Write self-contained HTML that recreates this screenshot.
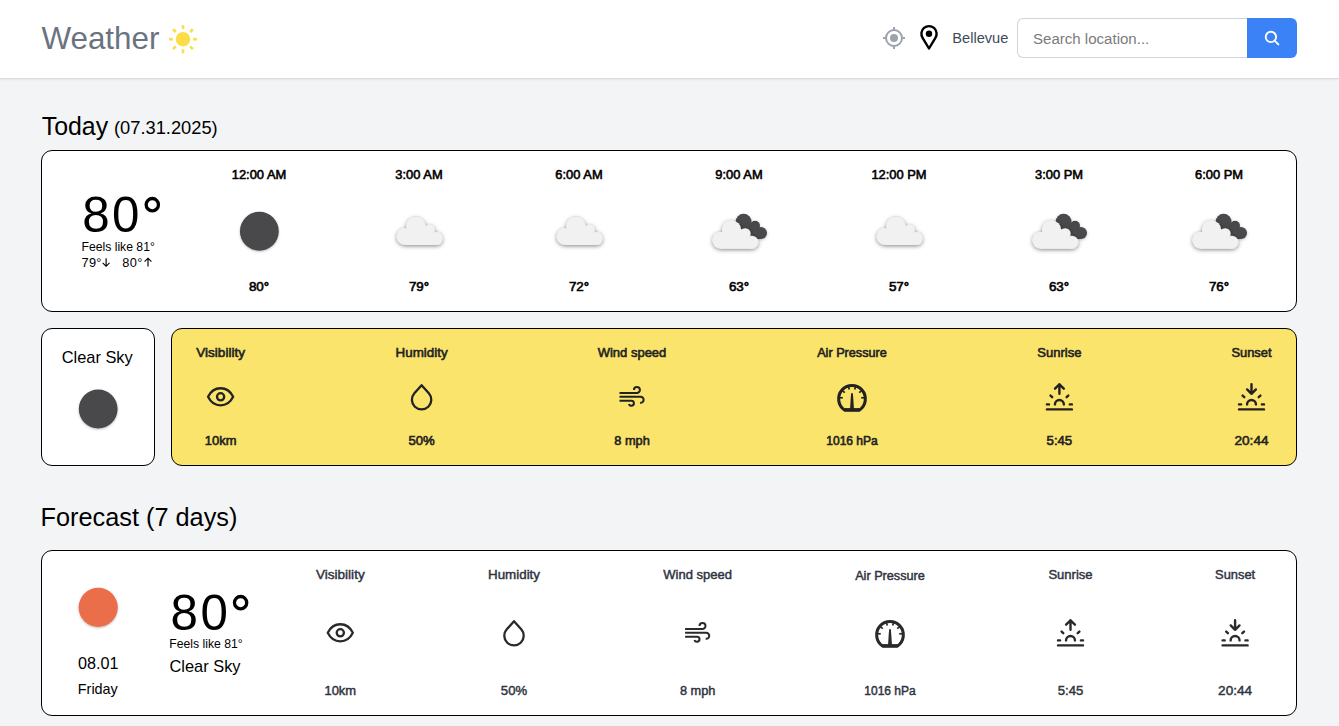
<!DOCTYPE html>
<html><head><meta charset="utf-8"><style>
html,body{margin:0;padding:0;}
body{width:1339px;height:726px;overflow:hidden;background:#f3f4f6;position:relative;font-family:"Liberation Sans", sans-serif;}
.t{position:absolute;line-height:0;white-space:nowrap;}
svg.ov{position:absolute;left:0;top:0;pointer-events:none;}
</style></head><body>
<div style="position:absolute;left:-10px;top:0px;width:1359px;height:78px;box-sizing:border-box;background:#fff;box-shadow:0 1px 3px 0 rgba(0,0,0,.1),0 1px 2px -1px rgba(0,0,0,.1);"></div><div class="t" style="left:41.40px;top:39.12px;font-size:31.4px;font-weight:400;color:#6b7280;">Weather</div><div class="t" style="left:952.30px;top:38.34px;font-size:14.6px;font-weight:400;color:#404a58;">Bellevue</div><div style="position:absolute;left:1017px;top:18px;width:231px;height:40px;box-sizing:border-box;background:#fff;border:1px solid #d1d5db;border-right:none;border-radius:6px 0 0 6px;"></div><div class="t" style="left:1033.00px;top:39.39px;font-size:15.05px;font-weight:400;color:#7b7b7b;">Search location...</div><div style="position:absolute;left:1247px;top:18px;width:50px;height:40px;box-sizing:border-box;background:#3b82f6;border-radius:0 6px 6px 0;"></div><div class="t" style="left:41.70px;top:125.87px;font-size:24.9px;font-weight:400;color:#000;">Today</div><div class="t" style="left:114.00px;top:127.86px;font-size:18.3px;font-weight:400;color:#000;">(07.31.2025)</div><div style="position:absolute;left:41px;top:150px;width:1256px;height:162px;box-sizing:border-box;background:#fff;border:1px solid #000;border-radius:11px;"></div><div class="t" style="left:82.30px;top:215.12px;font-size:49.3px;font-weight:400;color:#000;letter-spacing:2.4px;">80</div><div class="t" style="left:81.50px;top:246.67px;font-size:12.2px;font-weight:400;color:#000;">Feels like 81°</div><div class="t" style="left:81.50px;top:262.96px;font-size:12.8px;font-weight:400;color:#000;letter-spacing:0.3px;">79°</div><div class="t" style="left:122.30px;top:262.96px;font-size:12.8px;font-weight:400;color:#000;letter-spacing:0.3px;">80°</div><div class="t" style="left:-41.00px;width:600px;text-align:center;top:174.93px;font-size:12.9px;font-weight:400;color:#000;-webkit-text-stroke:0.6px #000;">12:00 AM</div><div class="t" style="left:-41.00px;width:600px;text-align:center;top:286.76px;font-size:13.4px;font-weight:400;color:#000;-webkit-text-stroke:0.6px #000;">80°</div><div class="t" style="left:119.00px;width:600px;text-align:center;top:174.93px;font-size:12.9px;font-weight:400;color:#000;-webkit-text-stroke:0.6px #000;">3:00 AM</div><div class="t" style="left:119.00px;width:600px;text-align:center;top:286.76px;font-size:13.4px;font-weight:400;color:#000;-webkit-text-stroke:0.6px #000;">79°</div><div class="t" style="left:279.00px;width:600px;text-align:center;top:174.93px;font-size:12.9px;font-weight:400;color:#000;-webkit-text-stroke:0.6px #000;">6:00 AM</div><div class="t" style="left:279.00px;width:600px;text-align:center;top:286.76px;font-size:13.4px;font-weight:400;color:#000;-webkit-text-stroke:0.6px #000;">72°</div><div class="t" style="left:439.00px;width:600px;text-align:center;top:174.93px;font-size:12.9px;font-weight:400;color:#000;-webkit-text-stroke:0.6px #000;">9:00 AM</div><div class="t" style="left:439.00px;width:600px;text-align:center;top:286.76px;font-size:13.4px;font-weight:400;color:#000;-webkit-text-stroke:0.6px #000;">63°</div><div class="t" style="left:599.00px;width:600px;text-align:center;top:174.93px;font-size:12.9px;font-weight:400;color:#000;-webkit-text-stroke:0.6px #000;">12:00 PM</div><div class="t" style="left:599.00px;width:600px;text-align:center;top:286.76px;font-size:13.4px;font-weight:400;color:#000;-webkit-text-stroke:0.6px #000;">57°</div><div class="t" style="left:759.00px;width:600px;text-align:center;top:174.93px;font-size:12.9px;font-weight:400;color:#000;-webkit-text-stroke:0.6px #000;">3:00 PM</div><div class="t" style="left:759.00px;width:600px;text-align:center;top:286.76px;font-size:13.4px;font-weight:400;color:#000;-webkit-text-stroke:0.6px #000;">63°</div><div class="t" style="left:919.00px;width:600px;text-align:center;top:174.93px;font-size:12.9px;font-weight:400;color:#000;-webkit-text-stroke:0.6px #000;">6:00 PM</div><div class="t" style="left:919.00px;width:600px;text-align:center;top:286.76px;font-size:13.4px;font-weight:400;color:#000;-webkit-text-stroke:0.6px #000;">76°</div><div style="position:absolute;left:41px;top:328px;width:114px;height:138px;box-sizing:border-box;background:#fff;border:1px solid #000;border-radius:11px;"></div><div class="t" style="left:-202.80px;width:600px;text-align:center;top:357.22px;font-size:16.4px;font-weight:400;color:#000;">Clear Sky</div><div style="position:absolute;left:171px;top:328px;width:1126px;height:138px;box-sizing:border-box;background:#fae46b;border:1px solid #000;border-radius:11px;"></div><div class="t" style="left:-79.40px;width:600px;text-align:center;top:352.69px;font-size:13.58px;font-weight:400;color:#222;-webkit-text-stroke:0.6px #222;">Visibility</div><div class="t" style="left:-79.40px;width:600px;text-align:center;top:440.81px;font-size:12.96px;font-weight:400;color:#222;-webkit-text-stroke:0.6px #222;">10km</div><div class="t" style="left:121.60px;width:600px;text-align:center;top:352.76px;font-size:13.39px;font-weight:400;color:#222;-webkit-text-stroke:0.6px #222;">Humidity</div><div class="t" style="left:121.60px;width:600px;text-align:center;top:440.75px;font-size:13.13px;font-weight:400;color:#222;-webkit-text-stroke:0.6px #222;">50%</div><div class="t" style="left:332.00px;width:600px;text-align:center;top:352.90px;font-size:13.0px;font-weight:400;color:#222;-webkit-text-stroke:0.6px #222;">Wind speed</div><div class="t" style="left:332.00px;width:600px;text-align:center;top:440.88px;font-size:12.75px;font-weight:400;color:#222;-webkit-text-stroke:0.6px #222;">8 mph</div><div class="t" style="left:552.00px;width:600px;text-align:center;top:353.01px;font-size:12.68px;font-weight:400;color:#222;-webkit-text-stroke:0.6px #222;">Air Pressure</div><div class="t" style="left:552.00px;width:600px;text-align:center;top:441.14px;font-size:12.0px;font-weight:400;color:#222;-webkit-text-stroke:0.6px #222;">1016 hPa</div><div class="t" style="left:759.40px;width:600px;text-align:center;top:352.90px;font-size:13.0px;font-weight:400;color:#222;-webkit-text-stroke:0.6px #222;">Sunrise</div><div class="t" style="left:759.40px;width:600px;text-align:center;top:440.74px;font-size:13.16px;font-weight:400;color:#222;-webkit-text-stroke:0.6px #222;">5:45</div><div class="t" style="left:951.50px;width:600px;text-align:center;top:352.93px;font-size:12.89px;font-weight:400;color:#222;-webkit-text-stroke:0.6px #222;">Sunset</div><div class="t" style="left:951.50px;width:600px;text-align:center;top:440.59px;font-size:13.6px;font-weight:400;color:#222;-webkit-text-stroke:0.6px #222;">20:44</div><div class="t" style="left:40.60px;top:517.03px;font-size:25.3px;font-weight:400;color:#000;">Forecast (7 days)</div><div style="position:absolute;left:41px;top:550px;width:1256px;height:166px;box-sizing:border-box;background:#fff;border:1px solid #000;border-radius:11px;"></div><div class="t" style="left:-201.80px;width:600px;text-align:center;top:663.39px;font-size:16.2px;font-weight:400;color:#000;">08.01</div><div class="t" style="left:-202.20px;width:600px;text-align:center;top:688.61px;font-size:14.4px;font-weight:400;color:#000;">Friday</div><div class="t" style="left:170.60px;top:613.12px;font-size:49.3px;font-weight:400;color:#000;letter-spacing:2.4px;">80</div><div class="t" style="left:169.30px;top:644.37px;font-size:12.2px;font-weight:400;color:#000;">Feels like 81°</div><div class="t" style="left:169.50px;top:665.52px;font-size:16.4px;font-weight:400;color:#000;">Clear Sky</div><div class="t" style="left:40.30px;width:600px;text-align:center;top:575.19px;font-size:13.58px;font-weight:400;color:#2f3440;-webkit-text-stroke:0.45px #2f3440;">Visibility</div><div class="t" style="left:40.30px;width:600px;text-align:center;top:690.91px;font-size:12.96px;font-weight:400;color:#2f3440;-webkit-text-stroke:0.45px #2f3440;">10km</div><div class="t" style="left:214.00px;width:600px;text-align:center;top:575.26px;font-size:13.39px;font-weight:400;color:#2f3440;-webkit-text-stroke:0.45px #2f3440;">Humidity</div><div class="t" style="left:214.00px;width:600px;text-align:center;top:690.85px;font-size:13.13px;font-weight:400;color:#2f3440;-webkit-text-stroke:0.45px #2f3440;">50%</div><div class="t" style="left:397.60px;width:600px;text-align:center;top:575.40px;font-size:13.0px;font-weight:400;color:#2f3440;-webkit-text-stroke:0.45px #2f3440;">Wind speed</div><div class="t" style="left:397.60px;width:600px;text-align:center;top:690.98px;font-size:12.75px;font-weight:400;color:#2f3440;-webkit-text-stroke:0.45px #2f3440;">8 mph</div><div class="t" style="left:590.00px;width:600px;text-align:center;top:575.51px;font-size:12.68px;font-weight:400;color:#2f3440;-webkit-text-stroke:0.45px #2f3440;">Air Pressure</div><div class="t" style="left:590.00px;width:600px;text-align:center;top:691.24px;font-size:12.0px;font-weight:400;color:#2f3440;-webkit-text-stroke:0.45px #2f3440;">1016 hPa</div><div class="t" style="left:770.50px;width:600px;text-align:center;top:575.40px;font-size:13.0px;font-weight:400;color:#2f3440;-webkit-text-stroke:0.45px #2f3440;">Sunrise</div><div class="t" style="left:770.50px;width:600px;text-align:center;top:690.84px;font-size:13.16px;font-weight:400;color:#2f3440;-webkit-text-stroke:0.45px #2f3440;">5:45</div><div class="t" style="left:935.10px;width:600px;text-align:center;top:575.43px;font-size:12.89px;font-weight:400;color:#2f3440;-webkit-text-stroke:0.45px #2f3440;">Sunset</div><div class="t" style="left:935.10px;width:600px;text-align:center;top:690.69px;font-size:13.6px;font-weight:400;color:#2f3440;-webkit-text-stroke:0.45px #2f3440;">20:44</div>
<svg class="ov" width="1339" height="726" viewBox="0 0 1339 726">
<defs>
<filter id="sh" x="-50%" y="-50%" width="200%" height="200%"><feDropShadow dx="0" dy="1" stdDeviation="1.2" flood-color="#000" flood-opacity="0.25"/></filter>
<filter id="shc" x="-50%" y="-50%" width="200%" height="200%"><feDropShadow dx="0" dy="1" stdDeviation="2" flood-color="#000" flood-opacity="0.5"/></filter>
<filter id="shd" x="-50%" y="-50%" width="200%" height="200%"><feDropShadow dx="0" dy="1" stdDeviation="1.5" flood-color="#000" flood-opacity="0.25"/></filter>
</defs>
<g fill="#fcdc47"><circle cx="183" cy="39.2" r="7.2"/><line x1="193.20" y1="39.20" x2="197.00" y2="39.20" stroke="#fcdc47" stroke-width="2.7"/><line x1="190.21" y1="46.41" x2="192.90" y2="49.10" stroke="#fcdc47" stroke-width="2.7"/><line x1="183.00" y1="49.40" x2="183.00" y2="53.20" stroke="#fcdc47" stroke-width="2.7"/><line x1="175.79" y1="46.41" x2="173.10" y2="49.10" stroke="#fcdc47" stroke-width="2.7"/><line x1="172.80" y1="39.20" x2="169.00" y2="39.20" stroke="#fcdc47" stroke-width="2.7"/><line x1="175.79" y1="31.99" x2="173.10" y2="29.30" stroke="#fcdc47" stroke-width="2.7"/><line x1="183.00" y1="29.00" x2="183.00" y2="25.20" stroke="#fcdc47" stroke-width="2.7"/><line x1="190.21" y1="31.99" x2="192.90" y2="29.30" stroke="#fcdc47" stroke-width="2.7"/></g><g stroke="#9ca3af" fill="none" stroke-width="2"><circle cx="894" cy="38" r="8"/><line x1="894" y1="27" x2="894" y2="30"/><line x1="894" y1="46" x2="894" y2="49"/><line x1="883" y1="38" x2="886" y2="38"/><line x1="902" y1="38" x2="905" y2="38"/></g><circle cx="894" cy="38" r="4" fill="#9ca3af"/><path d="M929 48.5 L922.6 37.8 A7.6 7.6 0 1 1 935.4 37.8 Z" fill="none" stroke="#000" stroke-width="2.4" stroke-linejoin="round"/><circle cx="929" cy="33.8" r="3.2" fill="#000"/><g stroke="#fff" stroke-width="1.85" fill="none" stroke-linecap="round"><circle cx="1270.9" cy="36.9" r="5.2"/><line x1="1274.9" y1="40.9" x2="1278.4" y2="44.4"/></g><circle cx="152.3" cy="204.65" r="6.15" fill="none" stroke="#000" stroke-width="3.3"/><g stroke="#000" stroke-width="1.15" fill="none"><path d="M106.1 258.2 V266.2 M102.7 262.9 L106.1 266.3 L109.5 262.9"/><path d="M148 258.2 V266.6 M144.6 261.6 L148 258.2 L151.4 261.6"/></g><circle cx="259.35" cy="231.2" r="19.45" fill="#49484c" filter="url(#sh)"/><g fill="#f1f1f1" filter="url(#shc)" transform="translate(419.60,231.00) scale(0.97 0.955) translate(-23.6,-14.75)"><circle cx="8.8" cy="20.7" r="8.8"/><circle cx="19.7" cy="9.9" r="9.9"/><circle cx="33.6" cy="13.8" r="5.7"/><circle cx="40.4" cy="22.7" r="6.8"/><path d="M8.8 20.7 L19.7 9.9 L33.6 13.8 L40.4 22.7 L40.4 29.5 L8.8 29.5 Z"/></g><g fill="#f1f1f1" filter="url(#shc)" transform="translate(579.60,231.00) scale(0.97 0.955) translate(-23.6,-14.75)"><circle cx="8.8" cy="20.7" r="8.8"/><circle cx="19.7" cy="9.9" r="9.9"/><circle cx="33.6" cy="13.8" r="5.7"/><circle cx="40.4" cy="22.7" r="6.8"/><path d="M8.8 20.7 L19.7 9.9 L33.6 13.8 L40.4 22.7 L40.4 29.5 L8.8 29.5 Z"/></g><g fill="#49484c" filter="url(#shd)" transform="translate(711.60,218.80)"><circle cx="32" cy="3" r="8"/><circle cx="43.5" cy="6.9" r="4.9"/><circle cx="49.4" cy="14.2" r="6"/><path d="M32 3 L43.5 6.9 L49.4 14.2 L49.4 20.2 L32 20.2 Z"/></g><g fill="#f1f1f1" filter="url(#shc)" transform="translate(735.40,234.60) scale(0.97 0.955) translate(-23.6,-14.75)"><circle cx="8.8" cy="20.7" r="8.8"/><circle cx="19.7" cy="9.9" r="9.9"/><circle cx="33.6" cy="13.8" r="5.7"/><circle cx="40.4" cy="22.7" r="6.8"/><path d="M8.8 20.7 L19.7 9.9 L33.6 13.8 L40.4 22.7 L40.4 29.5 L8.8 29.5 Z"/></g><g fill="#f1f1f1" filter="url(#shc)" transform="translate(899.60,231.00) scale(0.97 0.955) translate(-23.6,-14.75)"><circle cx="8.8" cy="20.7" r="8.8"/><circle cx="19.7" cy="9.9" r="9.9"/><circle cx="33.6" cy="13.8" r="5.7"/><circle cx="40.4" cy="22.7" r="6.8"/><path d="M8.8 20.7 L19.7 9.9 L33.6 13.8 L40.4 22.7 L40.4 29.5 L8.8 29.5 Z"/></g><g fill="#49484c" filter="url(#shd)" transform="translate(1031.60,218.80)"><circle cx="32" cy="3" r="8"/><circle cx="43.5" cy="6.9" r="4.9"/><circle cx="49.4" cy="14.2" r="6"/><path d="M32 3 L43.5 6.9 L49.4 14.2 L49.4 20.2 L32 20.2 Z"/></g><g fill="#f1f1f1" filter="url(#shc)" transform="translate(1055.40,234.60) scale(0.97 0.955) translate(-23.6,-14.75)"><circle cx="8.8" cy="20.7" r="8.8"/><circle cx="19.7" cy="9.9" r="9.9"/><circle cx="33.6" cy="13.8" r="5.7"/><circle cx="40.4" cy="22.7" r="6.8"/><path d="M8.8 20.7 L19.7 9.9 L33.6 13.8 L40.4 22.7 L40.4 29.5 L8.8 29.5 Z"/></g><g fill="#49484c" filter="url(#shd)" transform="translate(1191.60,218.80)"><circle cx="32" cy="3" r="8"/><circle cx="43.5" cy="6.9" r="4.9"/><circle cx="49.4" cy="14.2" r="6"/><path d="M32 3 L43.5 6.9 L49.4 14.2 L49.4 20.2 L32 20.2 Z"/></g><g fill="#f1f1f1" filter="url(#shc)" transform="translate(1215.40,234.60) scale(0.97 0.955) translate(-23.6,-14.75)"><circle cx="8.8" cy="20.7" r="8.8"/><circle cx="19.7" cy="9.9" r="9.9"/><circle cx="33.6" cy="13.8" r="5.7"/><circle cx="40.4" cy="22.7" r="6.8"/><path d="M8.8 20.7 L19.7 9.9 L33.6 13.8 L40.4 22.7 L40.4 29.5 L8.8 29.5 Z"/></g><circle cx="98.2" cy="409" r="19.4" fill="#49484c" filter="url(#sh)"/><g transform="translate(-0.40,0.00)" fill="none" stroke="#222" stroke-linecap="round" stroke-linejoin="round"><path d="M233.55 396.8 C231.04 401.93 226.65 405.35 221 405.35 C215.35 405.35 210.96 401.93 208.45 396.8 C210.96 391.67 215.35 388.25 221 388.25 C226.65 388.25 231.04 391.67 233.55 396.8 Z" stroke-width="2.3"/><circle cx="221" cy="396.8" r="3.6" stroke-width="2.3"/></g><g transform="translate(-0.40,0.00)" fill="none" stroke="#222" stroke-linecap="round" stroke-linejoin="round"><path d="M422 385.2 L429.23 393.28 A9.7 9.7 0 1 1 414.77 393.28 Z" stroke-width="2.3"/></g><g transform="translate(0.00,0.00)" fill="none" stroke="#222" stroke-linecap="round" stroke-linejoin="round"><path d="M619.5 392.9 H636.9 A3 3 0 1 0 633.9 389.9 M619.5 396.8 H640.6 A3 3 0 1 1 640.08 402.75 M619.5 400.7 H631.35 A2.55 2.55 0 1 1 628.89 403.91" stroke-width="2.0" stroke-linecap="butt"/></g><g transform="translate(0.10,0.00)" fill="none" stroke="#222" stroke-linecap="round" stroke-linejoin="round"><path d="M844.41 409.95 A13.35 13.35 0 1 1 859.39 409.95" stroke-width="3.1"/><path d="M844.41 409.95 H859.39" stroke-width="3.7" stroke-linecap="butt"/><line x1="842.70" y1="397.80" x2="839.30" y2="397.80" stroke-width="1.7" stroke-linecap="butt"/><line x1="844.74" y1="392.60" x2="841.71" y2="390.39" stroke-width="1.7" stroke-linecap="butt"/><line x1="849.23" y1="389.59" x2="848.01" y2="385.82" stroke-width="1.7" stroke-linecap="butt"/><line x1="854.57" y1="389.59" x2="855.79" y2="385.82" stroke-width="1.7" stroke-linecap="butt"/><line x1="859.06" y1="392.60" x2="862.09" y2="390.39" stroke-width="1.7" stroke-linecap="butt"/><line x1="861.10" y1="397.80" x2="864.50" y2="397.80" stroke-width="1.7" stroke-linecap="butt"/><path d="M849.9 409.5 L851.0 393.3 L852.8 393.3 L853.9 409.5 Z" fill="#222" stroke="none"/></g><g transform="translate(0.40,0.00)" fill="none" stroke="#222" stroke-linecap="round" stroke-linejoin="round"><path d="M1046.5 409.4 H1071.5 M1046.5 404.4 H1048.6 M1069.4 404.4 H1071.5 M1054.55 404.4 A4.45 4.45 0 0 1 1063.45 404.4 M1050.1 395.6 L1051.8 397.2 M1067.9 395.6 L1066.2 397.2 M1059 393.8 V384.3 M1054.6 388.7 L1059 384.3 L1063.4 388.7" stroke-width="2.4"/></g><g transform="translate(0.60,0.00)" fill="none" stroke="#222" stroke-linecap="round" stroke-linejoin="round"><g transform="translate(191.9,0)"><path d="M1046.5 409.4 H1071.5 M1046.5 404.4 H1048.6 M1069.4 404.4 H1071.5 M1054.55 404.4 A4.45 4.45 0 0 1 1063.45 404.4 M1050.1 395.6 L1051.8 397.2 M1067.9 395.6 L1066.2 397.2 M1059 384.3 V393.8 M1054.6 389.4 L1059 393.8 L1063.4 389.4" stroke-width="2.4"/></g></g><circle cx="98.2" cy="607.4" r="19.6" fill="#eb6e4b" filter="url(#sh)"/><circle cx="240.6" cy="602.65" r="6.15" fill="none" stroke="#000" stroke-width="3.3"/><g transform="translate(119.30,236.00)" fill="none" stroke="#2a2a2a" stroke-linecap="round" stroke-linejoin="round"><path d="M233.55 396.8 C231.04 401.93 226.65 405.35 221 405.35 C215.35 405.35 210.96 401.93 208.45 396.8 C210.96 391.67 215.35 388.25 221 388.25 C226.65 388.25 231.04 391.67 233.55 396.8 Z" stroke-width="2.3"/><circle cx="221" cy="396.8" r="3.6" stroke-width="2.3"/></g><g transform="translate(92.00,236.00)" fill="none" stroke="#2a2a2a" stroke-linecap="round" stroke-linejoin="round"><path d="M422 385.2 L429.23 393.28 A9.7 9.7 0 1 1 414.77 393.28 Z" stroke-width="2.3"/></g><g transform="translate(65.60,236.00)" fill="none" stroke="#2a2a2a" stroke-linecap="round" stroke-linejoin="round"><path d="M619.5 392.9 H636.9 A3 3 0 1 0 633.9 389.9 M619.5 396.8 H640.6 A3 3 0 1 1 640.08 402.75 M619.5 400.7 H631.35 A2.55 2.55 0 1 1 628.89 403.91" stroke-width="2.0" stroke-linecap="butt"/></g><g transform="translate(38.10,236.00)" fill="none" stroke="#2a2a2a" stroke-linecap="round" stroke-linejoin="round"><path d="M844.41 409.95 A13.35 13.35 0 1 1 859.39 409.95" stroke-width="3.1"/><path d="M844.41 409.95 H859.39" stroke-width="3.7" stroke-linecap="butt"/><line x1="842.70" y1="397.80" x2="839.30" y2="397.80" stroke-width="1.7" stroke-linecap="butt"/><line x1="844.74" y1="392.60" x2="841.71" y2="390.39" stroke-width="1.7" stroke-linecap="butt"/><line x1="849.23" y1="389.59" x2="848.01" y2="385.82" stroke-width="1.7" stroke-linecap="butt"/><line x1="854.57" y1="389.59" x2="855.79" y2="385.82" stroke-width="1.7" stroke-linecap="butt"/><line x1="859.06" y1="392.60" x2="862.09" y2="390.39" stroke-width="1.7" stroke-linecap="butt"/><line x1="861.10" y1="397.80" x2="864.50" y2="397.80" stroke-width="1.7" stroke-linecap="butt"/><path d="M849.9 409.5 L851.0 393.3 L852.8 393.3 L853.9 409.5 Z" fill="#2a2a2a" stroke="none"/></g><g transform="translate(11.50,236.00)" fill="none" stroke="#2a2a2a" stroke-linecap="round" stroke-linejoin="round"><path d="M1046.5 409.4 H1071.5 M1046.5 404.4 H1048.6 M1069.4 404.4 H1071.5 M1054.55 404.4 A4.45 4.45 0 0 1 1063.45 404.4 M1050.1 395.6 L1051.8 397.2 M1067.9 395.6 L1066.2 397.2 M1059 393.8 V384.3 M1054.6 388.7 L1059 384.3 L1063.4 388.7" stroke-width="2.4"/></g><g transform="translate(-15.80,236.00)" fill="none" stroke="#2a2a2a" stroke-linecap="round" stroke-linejoin="round"><g transform="translate(191.9,0)"><path d="M1046.5 409.4 H1071.5 M1046.5 404.4 H1048.6 M1069.4 404.4 H1071.5 M1054.55 404.4 A4.45 4.45 0 0 1 1063.45 404.4 M1050.1 395.6 L1051.8 397.2 M1067.9 395.6 L1066.2 397.2 M1059 384.3 V393.8 M1054.6 389.4 L1059 393.8 L1063.4 389.4" stroke-width="2.4"/></g></g>
</svg>
</body></html>
